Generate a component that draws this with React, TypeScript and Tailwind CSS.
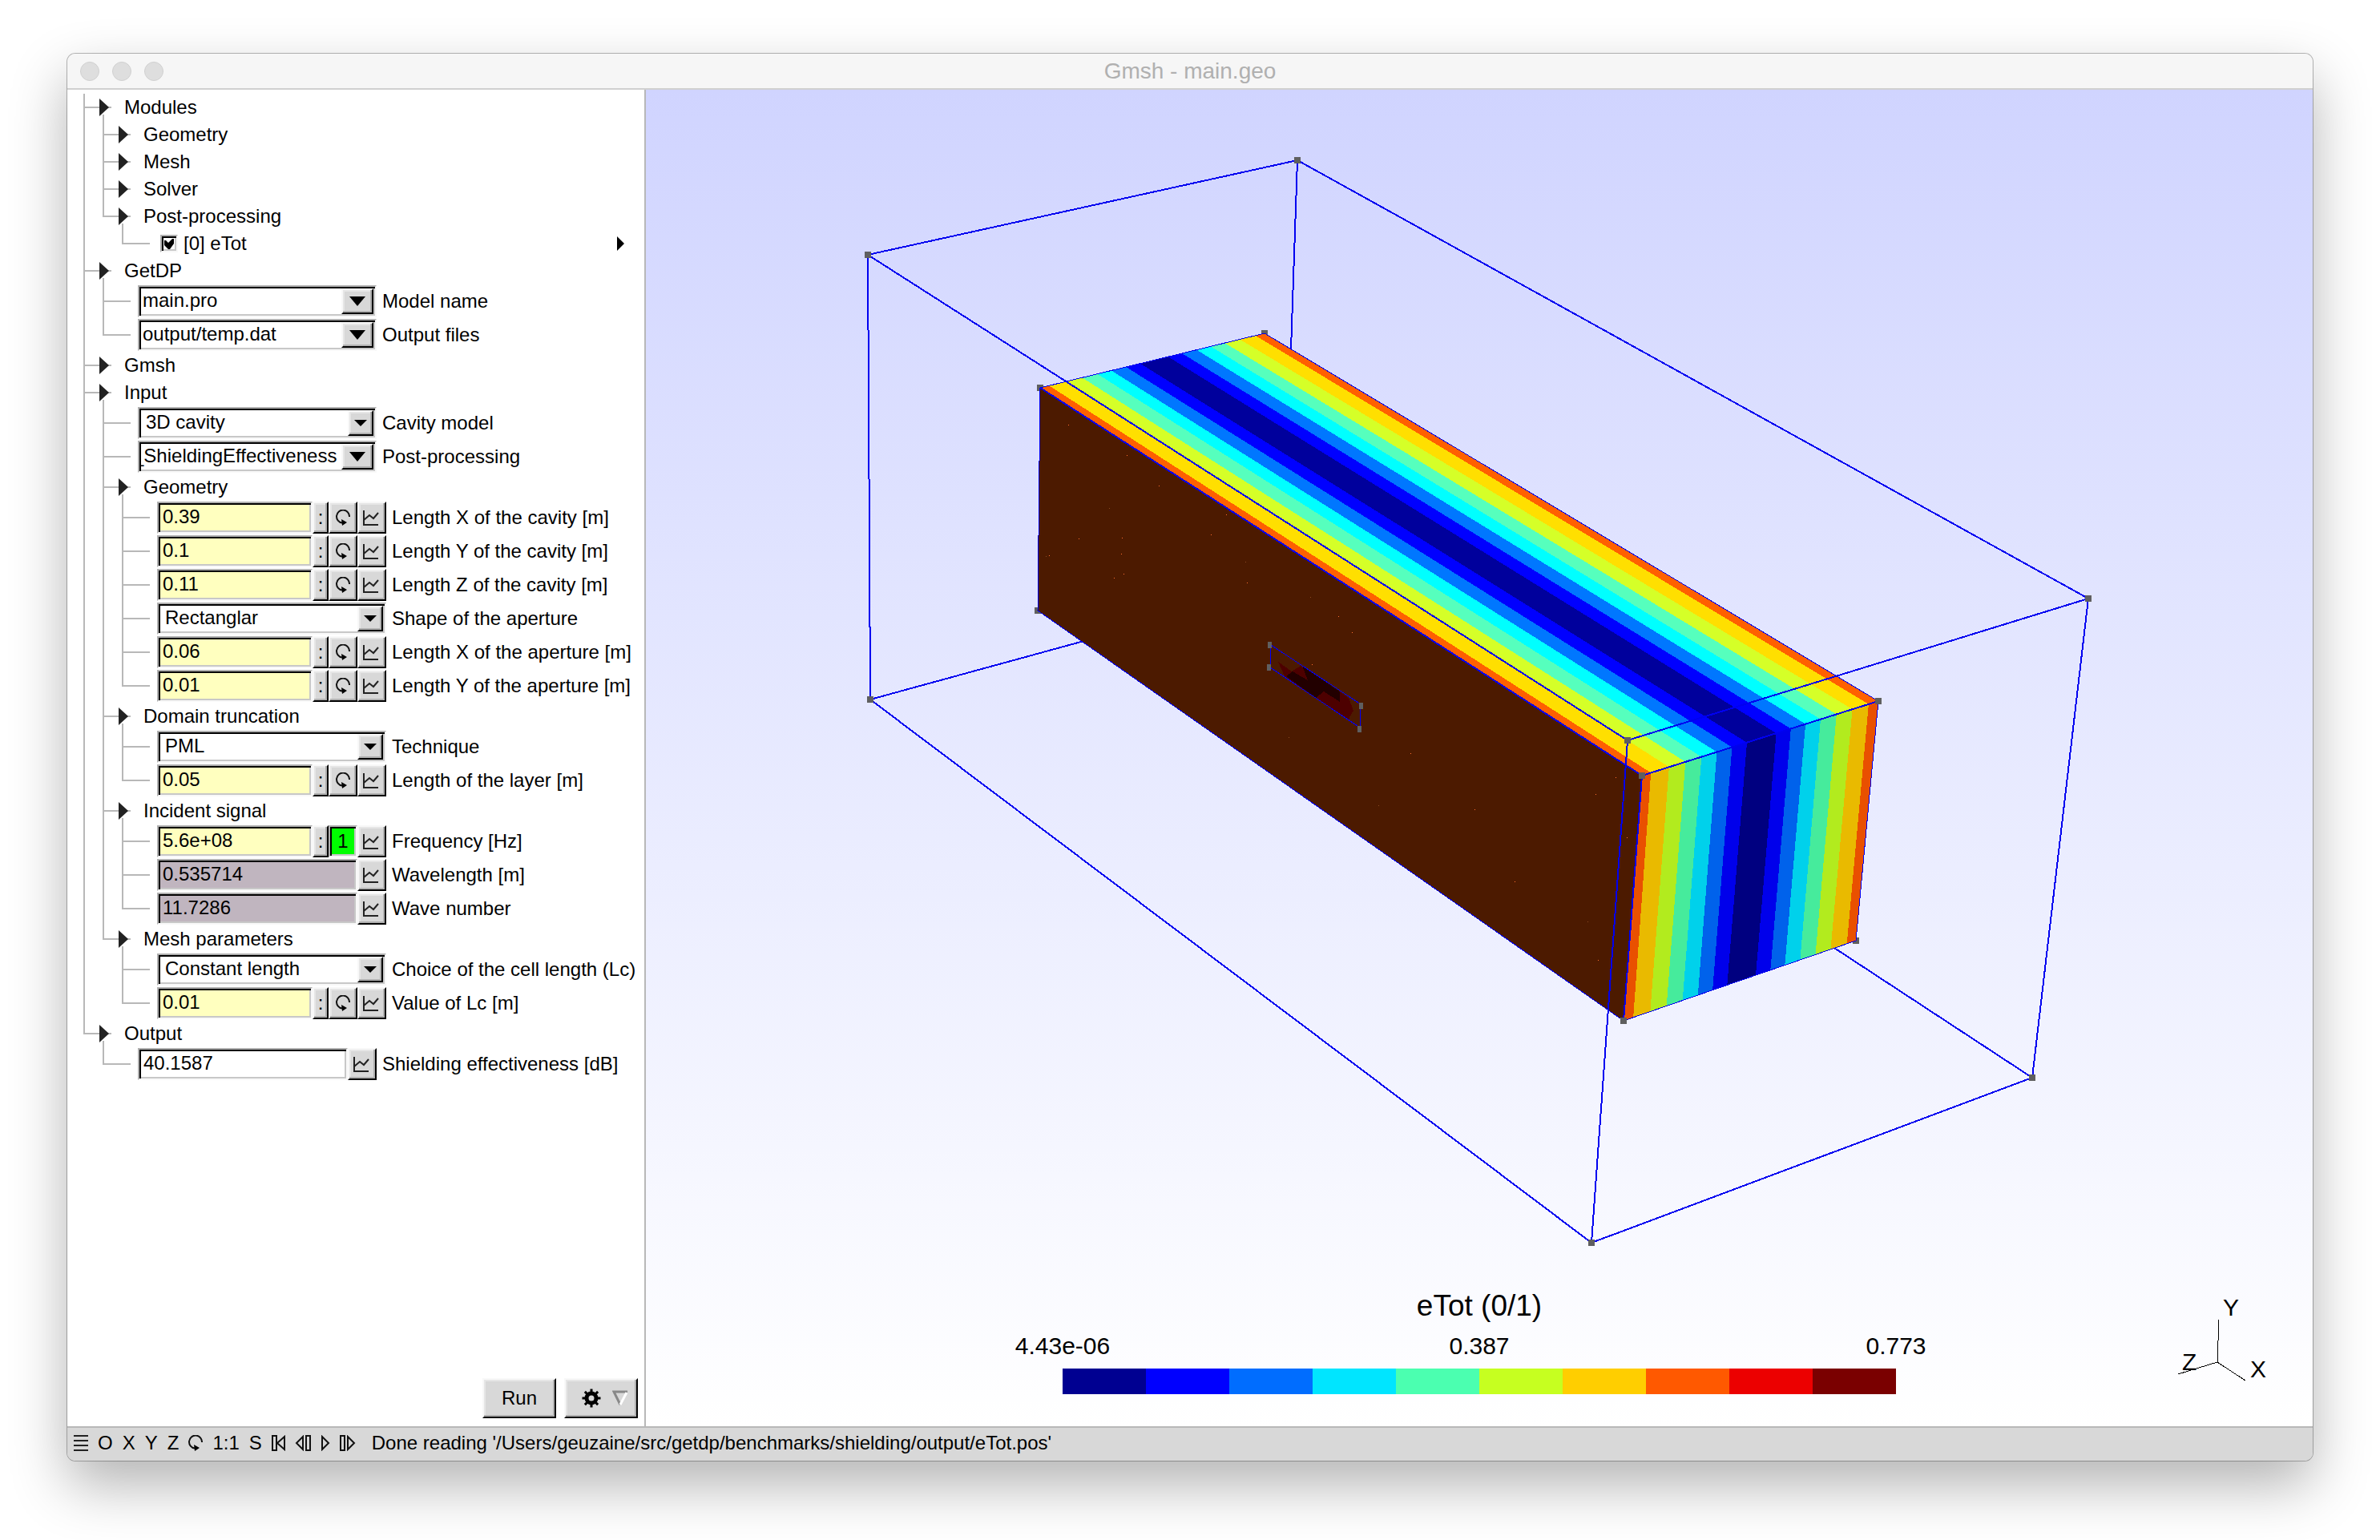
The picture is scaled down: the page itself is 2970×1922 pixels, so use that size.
import { useId, useState } from 'react';
import type { ReactNode } from 'react';

type Point = [number, number];

const DOWN_BOX =
  'border-2 border-t-[#b0b0b0] border-l-[#b0b0b0] border-r-[#f8f8f8] border-b-[#f8f8f8] shadow-[inset_2px_2px_0_#000,inset_-2px_-2px_0_#c8c8c8]';
const UP_BOX =
  'border-2 border-t-[#f8f8f8] border-l-[#f8f8f8] border-r-black border-b-black bg-[#d8d8d8] shadow-[inset_-2px_-2px_0_#b0b0b0,inset_2px_2px_0_#e6e6e6]';

/* ---------- icons ---------- */

function LoopIcon() {
  return (
    <svg width="18" height="20" viewBox="0 0 18 20" fill="none" stroke="#111" strokeWidth="2">
      <path d="M17 9A8 8 0 1 0 8 16.5" />
      <path d="M7 12l7 4-6 4z" fill="#000" stroke="none" />
    </svg>
  );
}

function GraphIcon() {
  return (
    <svg width="20" height="20" viewBox="0 0 20 20" fill="none" stroke="#222" strokeWidth="2">
      <path d="M1 1v18h18" />
      <path d="M1 13l7-6 5 4 6-7" />
    </svg>
  );
}

function GearIcon() {
  return (
    <svg width="24" height="24" viewBox="-12 -12 24 24">
      <circle r="6" fill="none" stroke="#000" strokeWidth="5" />
      {[0, 45, 90, 135].map((a) => (
        <path key={a} d="M0-11.5V-7M0 11.5V7" stroke="#000" strokeWidth="3" transform={`rotate(${a})`} />
      ))}
    </svg>
  );
}

/* ---------- option tree ---------- */

function Leaf({ children, short }: { children: ReactNode; short?: boolean }) {
  return (
    <li
      className={
        'relative flex items-center before:absolute before:left-0 before:top-0 before:w-0.5 before:bg-[#b8b8b8] before:h-full ' +
        (short ? 'h-[34px] last:before:h-[18px]' : 'h-[42px] last:before:h-[22px]')
      }
    >
      <span className="mr-[9px] h-0.5 w-[35px] shrink-0 bg-[#b8b8b8]" />
      {children}
    </li>
  );
}

function Group({ name, children }: { name: string; children?: ReactNode }) {
  return (
    <li className="relative before:absolute before:left-0 before:top-0 before:h-full before:w-0.5 before:bg-[#b8b8b8] last:before:h-[18px]">
      <button
        type="button"
        className={
          'relative flex h-[34px] items-center ' +
          (children ? 'after:absolute after:bottom-0 after:left-6 after:h-2 after:w-0.5 after:bg-[#b8b8b8]' : '')
        }
      >
        <svg width="51" height="22" viewBox="0 0 51 22">
          <path d="M0 10h35v2H0z" fill="#b8b8b8" />
          <path d="M20 0l12 11-12 11z" fill="#222" />
        </svg>
        {name}
      </button>
      {children && <ul className="pl-6">{children}</ul>}
    </li>
  );
}

interface RowProps {
  label: string;
  wide?: boolean;
  children: (id: string) => ReactNode;
}

function Row({ label, wide, children }: RowProps) {
  const id = useId();
  return (
    <Leaf>
      <div className={'flex h-10 shrink-0 ' + (wide ? 'w-[298px]' : 'w-[286px]')}>{children(id)}</div>
      <label htmlFor={id} className="ml-[7px] whitespace-nowrap">
        {label}
      </label>
    </Leaf>
  );
}

function GraphButton() {
  return (
    <button type="button" aria-label="Plot" className={'grid w-9 shrink-0 place-items-center pr-0.5 ' + UP_BOX}>
      <GraphIcon />
    </button>
  );
}

interface FieldProps {
  label: string;
  value: string;
  tone?: 'input' | 'computed' | 'plain';
  looped?: boolean;
  wide?: boolean;
}

function Field({ label, value, tone = 'input', looped, wide }: FieldProps) {
  const [text, setText] = useState(value);
  const bg = tone === 'input' ? 'bg-[#ffffbf]' : tone === 'computed' ? 'bg-[#c0b5bf]' : 'bg-white';
  return (
    <Row label={label} wide={wide}>
      {(id) => (
        <>
          <input
            id={id}
            value={text}
            onChange={(e) => setText(e.target.value)}
            readOnly={tone !== 'input'}
            className={'min-w-0 flex-1 pb-0.5 pl-[5px] outline-none ' + DOWN_BOX + ' ' + bg}
          />
          {tone === 'input' && (
            <>
              <button type="button" aria-label="Range" className={'w-5 shrink-0 ' + UP_BOX}>
                :
              </button>
              {looped ? (
                <button type="button" className={'w-9 shrink-0 bg-[#00ff00] ' + DOWN_BOX}>
                  1
                </button>
              ) : (
                <button type="button" aria-label="Loop" className={'grid w-9 shrink-0 place-items-center ' + UP_BOX}>
                  <LoopIcon />
                </button>
              )}
            </>
          )}
          <GraphButton />
        </>
      )}
    </Row>
  );
}

function Choice({ label, value, wide }: { label: string; value: string; wide?: boolean }) {
  return (
    <Row label={label} wide={wide}>
      {(id) => (
        <div className={'grid min-w-0 flex-1 bg-white p-0.5 ' + DOWN_BOX}>
          <select id={id} className="col-start-1 row-start-1 appearance-none bg-transparent pb-0.5 pl-1.5 outline-none">
            <option>{value}</option>
          </select>
          <span
            className={
              'pointer-events-none col-start-1 row-start-1 grid w-8 place-items-center justify-self-end ' + UP_BOX
            }
          >
            <svg width="16" height="8" viewBox="0 0 16 8">
              <path d="M0 0h16L8 8z" />
            </svg>
          </span>
        </div>
      )}
    </Row>
  );
}

function Combo({ label, value, scrolled }: { label: string; value: string; scrolled?: boolean }) {
  const [text, setText] = useState(value);
  return (
    <Row label={label} wide>
      {(id) => (
        <div className={'flex min-w-0 flex-1 bg-white p-0.5 ' + DOWN_BOX}>
          <input
            id={id}
            value={text}
            onChange={(e) => setText(e.target.value)}
            className={'min-w-0 flex-1 pb-0.5 outline-none ' + (scrolled ? '-indent-2.5' : 'pl-0.5')}
          />
          <button type="button" aria-label="Open list" className={'grid w-10 shrink-0 place-items-center ' + UP_BOX}>
            <svg width="20" height="12" viewBox="0 0 20 12">
              <path d="M0 0h20L10 12z" />
            </svg>
          </button>
        </div>
      )}
    </Row>
  );
}

function OptionTree() {
  const [visible, setVisible] = useState(true);
  return (
    <ul className="pl-5 pt-[5px]">
      <Group name="Modules">
        <Group name="Geometry" />
        <Group name="Mesh" />
        <Group name="Solver" />
        <Group name="Post-processing">
          <Leaf short>
            <label className="ml-1 flex items-center gap-[7px]">
              <span className={'grid size-[22px] place-items-center bg-white ' + DOWN_BOX}>
                <input
                  type="checkbox"
                  checked={visible}
                  onChange={(e) => setVisible(e.target.checked)}
                  className="col-start-1 row-start-1 size-4 appearance-none"
                />
                {visible && (
                  <svg className="pointer-events-none col-start-1 row-start-1" width="12" height="14" viewBox="0 0 12 14">
                    <path d="M0 3h2l3 3 5-5h2v6l-5 7H5L0 9z" />
                  </svg>
                )}
              </span>
              [0] eTot
            </label>
            <button type="button" aria-label="View options" className="ml-auto mr-[25px]">
              <svg width="9" height="18" viewBox="0 0 9 18">
                <path d="M0 0l9 9-9 9z" />
              </svg>
            </button>
          </Leaf>
        </Group>
      </Group>
      <Group name="GetDP">
        <Combo label="Model name" value="main.pro" />
        <Combo label="Output files" value="output/temp.dat" />
      </Group>
      <Group name="Gmsh" />
      <Group name="Input">
        <Choice label="Cavity model" value="3D cavity" wide />
        <Combo label="Post-processing" value="_ShieldingEffectiveness" scrolled />
        <Group name="Geometry">
          <Field label="Length X of the cavity [m]" value="0.39" />
          <Field label="Length Y of the cavity [m]" value="0.1" />
          <Field label="Length Z of the cavity [m]" value="0.11" />
          <Choice label="Shape of the aperture" value="Rectanglar" />
          <Field label="Length X of the aperture [m]" value="0.06" />
          <Field label="Length Y of the aperture [m]" value="0.01" />
        </Group>
        <Group name="Domain truncation">
          <Choice label="Technique" value="PML" />
          <Field label="Length of the layer [m]" value="0.05" />
        </Group>
        <Group name="Incident signal">
          <Field label="Frequency [Hz]" value="5.6e+08" looped />
          <Field label="Wavelength [m]" value="0.535714" tone="computed" />
          <Field label="Wave number" value="11.7286" tone="computed" />
        </Group>
        <Group name="Mesh parameters">
          <Choice label="Choice of the cell length (Lc)" value="Constant length" />
          <Field label="Value of Lc [m]" value="0.01" />
        </Group>
      </Group>
      <Group name="Output">
        <Field label="Shielding effectiveness [dB]" value="40.1587" tone="plain" wide />
      </Group>
    </ul>
  );
}

/* ---------- 3D view ---------- */

// domain box corners
const A: Point = [1083, 318];
const B: Point = [1619, 200];
const C: Point = [2606, 747];
const D: Point = [2031, 924];
const E: Point = [1086, 873];
const F: Point = [1986, 1551];
const G: Point = [2536, 1345];
const H: Point = [1601, 732];

// cavity corners
const TL: Point = [1298, 484];
const TB: Point = [1578, 416];
const TR: Point = [2344, 875];
const TF: Point = [2049, 968];
const BL: Point = [1295, 762];
const BF: Point = [2026, 1274];
const BR: Point = [2316, 1174];

// where the iso bands cross the far top, near top and near bottom edges
const FAR = [0, 0.04, 0.121, 0.187, 0.255, 0.317, 0.383, 0.446, 0.57, 0.632, 0.697, 0.76, 0.823, 0.89, 0.959, 1];
const NEAR = [0, 0.038, 0.115, 0.184, 0.252, 0.317, 0.381, 0.444, 0.568, 0.63, 0.692, 0.756, 0.823, 0.89, 0.959, 1];
const LOW = [0, 0.042, 0.115, 0.185, 0.254, 0.32, 0.383, 0.446, 0.569, 0.632, 0.694, 0.76, 0.826, 0.891, 0.961, 1];

const TOP_COLORS = ['#ff6000', '#ffdf00', '#d5ff28', '#56ffbd', '#00ffff', '#0077ff', '#0000ff', '#00009c'];
const SIDE_COLORS = ['#e95000', '#e9ba00', '#b2eb1e', '#46eb9c', '#00d1eb', '#0062eb', '#0000eb', '#000080'];

const SPECKS: Point[] = [
  [1333, 530], [1406, 568], [1446, 606], [1384, 634], [1346, 672], [1400, 671], [1399, 691], [1305, 694],
  [1309, 693], [1390, 721], [1402, 716], [1554, 701], [1556, 727], [1511, 667], [1530, 642], [1635, 745],
  [1670, 769], [1637, 829], [1687, 789], [1608, 920], [2016, 970], [1991, 991], [2030, 1045], [1981, 1150],
  [1994, 1198], [1760, 940], [1840, 1010], [1720, 1005], [1890, 1100],
];

const lerp = (p: Point, q: Point, t: number): Point => [p[0] + (q[0] - p[0]) * t, p[1] + (q[1] - p[1]) * t];
const poly = (...pts: Point[]) => pts.map((p) => p.map((v) => v.toFixed(1)).join(',')).join(' ');

function Bands({ a, b, c, d, from, to, colors }: {
  a: Point; b: Point; c: Point; d: Point; from: number[]; to: number[]; colors: string[];
}) {
  return (
    <g>
      {from.slice(0, -1).map((t, i) => (
        <polygon
          key={i}
          fill={colors[Math.min(i, 14 - i)]}
          points={poly(lerp(a, b, t), lerp(a, b, from[i + 1]), lerp(c, d, to[i + 1]), lerp(c, d, to[i]))}
        />
      ))}
    </g>
  );
}

function Marker({ at, size = 8 }: { at: Point; size?: number }) {
  return <rect x={at[0] - size / 2} y={at[1] - size / 2} width={size} height={size} fill="#5f5f5f" />;
}

function Scene() {
  return (
    <svg
      viewBox="806 112 2080 1668"
      shapeRendering="crispEdges"
      className="col-start-1 row-start-1 h-full w-full"
      fill="none"
      stroke="none"
    >
      <g stroke="#0000f0" strokeWidth="2">
        <polyline points={poly(A, B, C, G, F, E, A)} />
        <polyline points={poly(B, H, G)} />
        <polyline points={poly(E, H)} />
      </g>
      {[TL, TB, BL, BR].map((p, i) => (
        <Marker key={i} at={p} />
      ))}

      <polygon points={poly(TL, TF, BF, BL)} fill="#4c1a00" />
      {SPECKS.map(([x, y], i) => (
        <rect key={i} x={x} y={y} width="1" height="1" fill={i % 4 === 3 ? '#8a4a20' : '#ff7030'} />
      ))}
      <Bands a={TL} b={TB} c={TF} d={TR} from={FAR} to={NEAR} colors={TOP_COLORS} />
      <Bands a={TF} b={TR} c={BF} d={BR} from={NEAR} to={LOW} colors={SIDE_COLORS} />

      {/* aperture */}
      <polygon
        fill="#4d0000"
        points="1595,826 1612,838 1623,831 1672,863 1683,871 1689,887 1684,895 1684,899 1643,872 1603,844"
      />
      <polygon fill="#220000" points="1605,844 1613,838 1632,849 1625,831 1672,863 1672,876 1652,863 1642,871" />
      <polygon points="1586,805 1698,879 1697,908 1585,833" stroke="#0000ff" strokeWidth="1" />
      {[[1584, 805], [1583, 833], [1698, 881], [1696, 910]].map(([x, y]) => (
        <rect key={x} x={x - 2} y={y - 4} width="5" height="8" fill="#5f5f5f" />
      ))}

      <g stroke="#0000f0">
        <polyline points={poly(BL, TL, TB, TR, BR, BF, BL)} strokeWidth="1" />
        <polyline points={poly(TL, TF, TR)} strokeWidth="2" />
        <polyline points={poly(TF, BF)} strokeWidth="2" />
        <polyline points={poly(A, D, C)} strokeWidth="2" />
        <polyline points={poly(D, F)} strokeWidth="2" />
      </g>
      {[A, B, C, D, E, F, G, TF, TR, BF].map((p, i) => (
        <Marker key={i} at={p} />
      ))}
    </svg>
  );
}

const SCALE = [
  'bg-[#000091]', 'bg-[#0000ff]', 'bg-[#006dff]', 'bg-[#00e5ff]', 'bg-[#4bffb0]',
  'bg-[#c6ff20]', 'bg-[#ffce00]', 'bg-[#ff5900]', 'bg-[#ec0000]', 'bg-[#7a0000]',
];

function ColorScale() {
  return (
    <div className="col-start-1 row-start-1 mb-10 w-1/2 self-end justify-self-center whitespace-nowrap text-center text-[30px] leading-8">
      <div className="mb-4 text-[37px] leading-9">eTot (0/1)</div>
      <div className="mb-3 flex justify-between">
        <span className="flex w-0 justify-center">4.43e-06</span>
        <span>0.387</span>
        <span className="flex w-0 justify-center">0.773</span>
      </div>
      <div className="flex h-8">
        {SCALE.map((c) => (
          <div key={c} className={'flex-1 ' + c} />
        ))}
      </div>
    </div>
  );
}

function Axes() {
  return (
    <svg
      width="120"
      height="120"
      viewBox="0 0 120 120"
      shapeRendering="crispEdges"
      className="col-start-1 row-start-1 mb-11 mr-[50px] self-end justify-self-end"
    >
      <path d="M53 31L51 84L2 99M51 84L86 107" fill="none" stroke="#000" strokeWidth="1" />
      <g fontSize="30">
        <text x="58" y="26">Y</text>
        <text x="92" y="103">X</text>
        <text x="7" y="94">Z</text>
      </g>
    </svg>
  );
}

/* ---------- status bar ---------- */

function StatusBar() {
  return (
    <footer className="flex h-[43px] items-center border-t-2 border-[#b8b8b8] bg-[#d8d8d8] pb-1 pl-2">
      <div className="flex items-center gap-3">
        <button type="button" aria-label="Menu">
          <svg width="18" height="20" viewBox="0 0 18 20">
            <path d="M0 0h18v2H0zM0 6h18v2H0zM0 12h18v2H0zM0 18h18v2H0z" fill="#222" />
          </svg>
        </button>
        <button type="button">O</button>
        <button type="button">X</button>
        <button type="button">Y</button>
        <button type="button">Z</button>
        <button type="button" aria-label="Rotate">
          <LoopIcon />
        </button>
        <button type="button">1:1</button>
        <button type="button">S</button>
      </div>
      <div className="ml-3 flex items-center gap-3 [&_svg]:fill-none [&_svg]:stroke-[#111] [&_svg]:stroke-2">
        <button type="button" aria-label="Rewind">
          <svg width="17" height="20" viewBox="0 0 17 20">
            <path d="M1 1h5v18H1zM16 2v16L7 10z" />
          </svg>
        </button>
        <button type="button" aria-label="Step back">
          <svg width="20" height="20" viewBox="0 0 20 20">
            <path d="M14 1h5v18h-5zM10 2v16L2 10z" />
          </svg>
        </button>
        <button type="button" aria-label="Play">
          <svg width="12" height="20" viewBox="0 0 12 20">
            <path d="M2 2v16l8-8z" />
          </svg>
        </button>
        <button type="button" aria-label="Step forward">
          <svg width="20" height="20" viewBox="0 0 20 20">
            <path d="M1 1h5v18H1zM10 2v16l8-8z" />
          </svg>
        </button>
      </div>
      <span className="ml-5 whitespace-nowrap">
        Done reading '/Users/geuzaine/src/getdp/benchmarks/shielding/output/eTot.pos'
      </span>
    </footer>
  );
}

export default function App() {
  return (
    <div className="flex min-h-screen bg-white px-[84px] pb-[99px] pt-[67px] font-['Liberation_Sans',Arial,sans-serif] text-[24px] leading-7 text-black">
      <div className="flex min-w-0 flex-1 flex-col overflow-hidden rounded-[10px] shadow-[0_0_0_1px_rgba(0,0,0,0.28),0_30px_70px_rgba(0,0,0,0.3)]">
        <header className="grid h-[45px] grid-cols-[1fr_auto_1fr] items-center border-b-2 border-[#d0d0d0] bg-[#f6f6f6] px-4">
          <div className="flex gap-4">
            {['Close', 'Minimize', 'Zoom'].map((n) => (
              <button
                key={n}
                type="button"
                aria-label={n}
                className="size-6 rounded-full border border-[#d0d0d0] bg-[#dedede]"
              />
            ))}
          </div>
          <h1 className="text-[28px] text-[#b0b0b0]">Gmsh - main.geo</h1>
        </header>

        <main className="flex flex-1">
          <aside className="flex w-[722px] shrink-0 flex-col justify-between border-r-2 border-[#b8b8b8] bg-white">
            <OptionTree />
            <div className="flex justify-end gap-2.5 pb-2.5 pr-2">
              <button type="button" className={'h-[50px] w-[92px] ' + UP_BOX}>
                Run
              </button>
              <button
                type="button"
                aria-label="Settings"
                className={'flex h-[50px] w-[92px] items-center justify-end gap-3.5 pr-2.5 ' + UP_BOX}
              >
                <GearIcon />
                <svg width="20" height="20" viewBox="0 0 20 20" fill="none" strokeWidth="3">
                  <path d="M19 2H2L10 18" stroke="#888" />
                  <path d="M18 3L10 18" stroke="#fff" />
                </svg>
              </button>
            </div>
          </aside>
          <section className="grid min-w-0 flex-1 bg-linear-to-b from-[#d0d4ff] to-white">
            <Scene />
            <ColorScale />
            <Axes />
          </section>
        </main>

        <StatusBar />
      </div>
    </div>
  );
}
